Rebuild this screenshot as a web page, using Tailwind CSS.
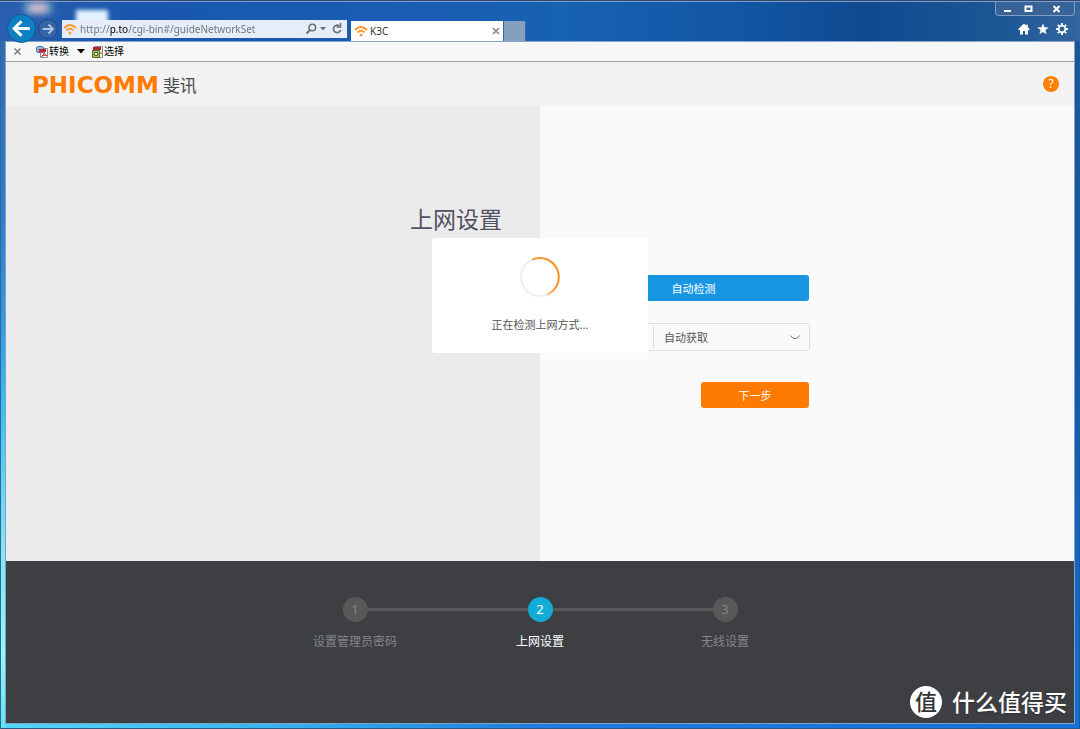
<!DOCTYPE html>
<html lang="zh-CN">
<head>
<meta charset="utf-8">
<title>K3C</title>
<script src="https://cdn.jsdelivr.net/npm/@tailwindcss/browser@4"></script>
</head>
<body class="font-['Noto_Sans','Noto_Sans_CJK_SC',sans-serif] text-[11px] text-[#555]">
<div class="flex min-h-screen flex-col border-t border-[#31486f] bg-[linear-gradient(180deg,#2f68b4_0,#2b7fd0_30%,#2f9de8_45%,#3cc3f6_57%,#7fe6fb_75%,#8ffafd_90%,#5ce3fb_100%),linear-gradient(180deg,#1d5597_0,#0f58b0_50%,#1470dc_100%),linear-gradient(90deg,#55d8fa_0,#38b4f0_25%,#1d7ce0_50%,#1670dc_100%)] bg-[size:6px_100%,6px_calc(100%_-_6px),100%_100%] bg-[position:0_0,100%_0,0_0] bg-no-repeat shadow-[inset_1px_0_0_#3d6485,inset_-1px_-1px_0_#2c5888]">

  <!-- Window title bar -->
  <header class="relative z-10 flex h-10 shrink-0 items-end border-t border-[#7f9ecb] bg-[linear-gradient(90deg,#2a5fae_0,#1957ae_12%,#1a5cb2_35%,#1762b2_52%,#1257a5_68%,#0f4a90_80%,#1d5795_93%,#34669f_100%)] pl-[7px]">
    <div class="absolute top-0 left-6 flex h-3 w-7 bg-[#6b9fc0] blur-[3px]"><i class="mx-auto h-3 w-4 bg-[#c9b9cc]"></i></div>
    <div class="absolute top-2 left-19 h-5 w-8 bg-[#e4f3ff] blur-[2px]"></div>
    <button aria-label="后退" class="relative mb-[-2px] size-[29px] shrink-0 rounded-full border border-[#155a93] bg-[#0d80c4] text-white">
      <svg viewBox="0 0 26 26" class="size-full" fill="none" stroke="currentColor" stroke-width="3"><path d="M21 13H6.500M13 6l-7 7 7 7"/></svg>
    </button>
    <button aria-label="前进" class="relative mb-[2px] ml-[2px] size-5 shrink-0 rounded-full border border-[#23477f] bg-[#3565a8] text-[#b4c8e4]">
      <svg viewBox="0 0 20 20" class="size-full" fill="none" stroke="currentColor" stroke-width="2"><path d="M4 10h11M10.500 5l5 5-5 5"/></svg>
    </button>
    <form class="relative mb-[3px] ml-1 flex h-[18px] w-[285px] shrink-0 items-center gap-[3px] bg-[#e6edf8] pr-1 pl-px text-[#6c7178]">
      <svg viewBox="0 0 14 12" class="h-3 w-[14px] shrink-0" fill="none" stroke="#fa9a2d" stroke-width="2"><path d="M1 5q6-6 12 0M3.500 7.500q3.500-3.500 7 0"/><circle cx="7" cy="10" r="1.500" fill="#fa9a2d" stroke="none"/></svg>
      <input aria-label="地址" value="http://p.to/cgi-bin#/guideNetworkSet" class="h-4 min-w-0 flex-1 bg-[linear-gradient(90deg,#6c7178_30px,#000_30px,#000_48px,#6c7178_48px)] bg-clip-text text-[10px] text-transparent">
      <button type="button" aria-label="搜索"><svg viewBox="0 0 12 12" class="size-3" fill="none" stroke="currentColor" stroke-width="1.600"><circle cx="7.300" cy="4.500" r="3.300"/><path d="M5 7L1.500 10.500" stroke-width="2"/></svg></button>
      <button type="button" aria-label="更多"><svg viewBox="0 0 6 4" class="h-1 w-[6px]" fill="currentColor"><path d="M0 0h6L3 3.500z"/></svg></button>
      <button type="button" aria-label="刷新" class="ml-[2px]"><svg viewBox="0 0 12 12" class="size-3" fill="none" stroke="currentColor" stroke-width="1.600"><path d="M8.500 3A3.700 3.700 0 1 0 9.700 7"/><path d="M5.500 4h4V0" /></svg></button>
    </form>
    <div class="relative ml-1 flex h-5 w-[152px] shrink-0 items-center gap-[2px] bg-white px-[3px] text-[10px] text-[#333]">
      <svg viewBox="0 0 14 12" class="h-3 w-[14px] shrink-0" fill="none" stroke="#fa9a2d" stroke-width="2"><path d="M1 5q6-6 12 0M3.500 7.500q3.500-3.500 7 0"/><circle cx="7" cy="10" r="1.500" fill="#fa9a2d" stroke="none"/></svg>
      <span class="flex-1">K3C</span>
      <button aria-label="关闭标签页"><svg viewBox="0 0 8 8" class="size-2" stroke="#888" stroke-width="1.600"><path d="M1 1l6 6M7 1L1 7"/></svg></button>
    </div>
    <button aria-label="新标签页" class="h-5 w-[23px] shrink-0 border-x border-[#3d659a] bg-[#849fc0]"></button>
    <div class="ml-auto flex h-full flex-col items-end justify-between pr-[5px] text-white">
      <div class="grid h-[14px] w-20 grid-cols-[23px_20px_1fr] divide-x divide-[#3c6597] rounded-b border border-t-0 border-[#7f9dc3] bg-[#376399]">
        <button aria-label="最小化" class="flex items-center justify-center"><svg viewBox="0 0 9 8" class="h-2 w-[9px]"><path d="M1 5h7v2H1z" fill="#fff"/></svg></button>
        <button aria-label="最大化" class="flex items-center justify-center"><svg viewBox="0 0 9 8" class="h-2 w-[9px]" fill="none" stroke="#fff" stroke-width="2"><path d="M1.500 1.500h6v4.500h-6z"/></svg></button>
        <button aria-label="关闭" class="flex items-center justify-center"><svg viewBox="0 0 9 8" class="h-2 w-[9px]" stroke="#fff" stroke-width="2"><path d="M1.500 1l6 6M7.500 1l-6 6"/></svg></button>
      </div>
      <div class="flex gap-[7px] pr-[7px] pb-[6px]">
        <button aria-label="主页"><svg viewBox="0 0 12 12" class="size-3" fill="#fff"><path d="M6 .5L0 6.300l1 1 1-.9V11.500h3V8h2v3.500h3V6.400l1 .9 1-1L9.800 4.200V1.500H8.300v1.200z"/></svg></button>
        <button aria-label="收藏夹"><svg viewBox="0 0 12 12" class="size-3" fill="#fff"><path d="M6 .3l1.500 3.900 4.300.2-3.400 2.600 1.200 4.200L6 8.900l-3.600 2.300L3.600 7 .2 4.400l4.300-.2z"/></svg></button>
        <button aria-label="工具"><svg viewBox="0 0 12 12" class="size-3" fill="none" stroke="#fff"><circle cx="6" cy="6" r="3.300" stroke-width="1.700"/><path d="M6 0v2M6 10v2M0 6h2M10 6h2M1.800 1.800l1.400 1.400M8.800 8.800l1.400 1.400M10.200 1.800L8.800 3.200M3.200 8.800l-1.400 1.400" stroke-width="1.800"/></svg></button>
      </div>
    </div>
  </header>

  <div class="mx-[6px] mb-[6px] flex flex-1 flex-col shadow-[0_0_0_1px_#7fa3c4]">
    <!-- Add-on toolbar -->
    <div class="flex h-[21px] shrink-0 items-center border-t border-b border-t-[#86a5cc] border-b-[#a0a0a0] bg-[#f7f7f7] pl-2 text-[10px] text-black">
      <button aria-label="关闭工具栏"><svg viewBox="0 0 7 7" class="size-[7px]" stroke="#777" stroke-width="1.400"><path d="M.5.500l6 6M6.500.500l-6 6"/></svg></button>
      <button class="ml-[15px] flex items-center">
        <svg viewBox="0 0 13 12" class="h-3 w-[13px]"><path d="M4.500 2.500h7v9h-7z" fill="#fff" stroke="#888"/><rect x=".5" y=".5" width="7" height="6" rx="2" fill="#8fb4dd" stroke="#3a6ea8"/><path d="M3 3h7v3H3z" fill="#c8202c"/><path d="M5.500 10.500c2-1.500 2.500-3 2.300-5 .5 2.500 1.500 3.700 3.200 3.900-2-.3-3.700 0-5.500 1.100z" fill="none" stroke="#c8202c"/></svg>
        转换
      </button>
      <button aria-label="转换选项" class="ml-2"><svg viewBox="0 0 8 5" class="h-[5px] w-2"><path d="M0 0h8L4 4.500z"/></svg></button>
      <button class="ml-[7px] flex items-center">
        <svg viewBox="0 0 12 12" class="size-3"><path d="M2.500.500h8v11h-8z" fill="#fff" stroke="#888"/><path d="M1 1h8v3H1z" fill="#b82230"/><path d="M6 4c1 2 2 3 4 3.500" fill="none" stroke="#c8202c"/><path d="M.5 4.500h7v7h-7z" fill="#a8bf6a" stroke="#4e6b22"/><path d="M2.500 6.500h3v3h-3z" fill="#e8f0cc" stroke="#4e6b22"/></svg>
        选择
      </button>
    </div>

    <!-- Site header -->
    <div class="flex h-11 shrink-0 items-center justify-between bg-[#f2f2f2] pr-[15px] pl-[26px]">
      <a href="#" class="flex items-center gap-1 pt-[2px]">
        <span class="font-['DejaVu_Sans'] text-[23px] leading-6 font-bold text-[#ff7a00]">PHICOMM</span>
        <span class="pt-[2px] text-[17px] leading-6 text-[#4a4a4a]">斐讯</span>
      </a>
      <button aria-label="帮助" class="size-4 rounded-full bg-[#ff7f00] text-center text-[12px] leading-4 text-white">?</button>
    </div>

    <!-- Network setup -->
    <main class="relative grid flex-1 grid-cols-2">
      <section class="bg-[#ebebeb] pt-[97px] pr-[38px] text-right">
        <h1 class="text-[23px] leading-8 text-[#515362]">上网设置</h1>
      </section>
      <section class="bg-[#fafafa] pt-[169px] pl-[38px]">
        <form class="flex w-[232px] flex-col">
          <button type="button" class="mr-px h-[26px] rounded-[3px] bg-[#1896e2] pt-[3px] text-white">自动检测</button>
          <div class="mt-[22px] flex h-7 items-center rounded-[3px] border border-[#dedede] pl-[74px]">
            <select aria-label="上网方式" class="h-[22px] flex-1 appearance-none border-l border-[#dedede] pt-[2px] pl-[10px] text-[#555]"><option>自动获取</option></select>
            <svg viewBox="0 0 10 5" class="mr-[9px] h-[5px] w-[10px]" fill="none" stroke="#777"><path d="M.5.500Q5 7 9.500.500"/></svg>
          </div>
          <button type="button" class="mt-[31px] mr-px h-[26px] w-[108px] self-end rounded-[3px] bg-[#ff7a00] pt-[2px] text-white">下一步</button>
        </form>
      </section>
      <div role="status" class="absolute top-[132px] left-1/2 flex h-[115px] w-[216px] -translate-x-1/2 flex-col items-center rounded-[3px] bg-white pt-[19px]">
        <svg viewBox="0 0 40 40" class="size-10" fill="none" stroke-width="2"><defs><linearGradient id="arc" x1="0" y1="0" x2="0" y2="1"><stop offset="0" stop-color="#ff9326"/><stop offset=".85" stop-color="#ff9326"/><stop offset="1" stop-color="#ffc384"/></linearGradient></defs><circle cx="20" cy="20" r="19" stroke="#efefef"/><path d="M12.500 2.500A19 19 0 0 1 27 37.700" stroke="url(#arc)"/></svg>
        <p class="mt-5 leading-4">正在检测上网方式...</p>
      </div>
    </main>

    <!-- Progress steps -->
    <footer class="relative h-[162px] shrink-0 bg-[#3e3f43] pt-9">
      <ol class="mx-auto grid w-[555px] grid-cols-3 text-center text-[12px] text-[#85868a]">
        <li>
          <div class="flex items-center"><i class="flex-1"></i><span class="size-[25px] rounded-full bg-[#585858] text-[13px] leading-[25px]">1</span><i class="h-[3px] flex-1 bg-[#585858]"></i></div>
          <p class="mt-[10px] leading-5">设置管理员密码</p>
        </li>
        <li class="text-white">
          <div class="flex items-center"><i class="h-[3px] flex-1 bg-[#585858]"></i><span class="size-[25px] rounded-full bg-[#12acd6] text-[13px] leading-[25px]">2</span><i class="h-[3px] flex-1 bg-[#585858]"></i></div>
          <p class="mt-[10px] leading-5">上网设置</p>
        </li>
        <li>
          <div class="flex items-center"><i class="h-[3px] flex-1 bg-[#585858]"></i><span class="size-[25px] rounded-full bg-[#585858] text-[13px] leading-[25px]">3</span><i class="flex-1"></i></div>
          <p class="mt-[10px] leading-5">无线设置</p>
        </li>
      </ol>
      <div class="absolute right-[7px] bottom-[5px] flex items-center gap-[10px] text-[23px] leading-8 font-medium text-white">
        <span class="flex size-8 items-center justify-center rounded-full bg-white pb-[2px] text-[22px] text-[#333]">值</span>
        <span class="text-shadow-sm">什么值得买</span>
      </div>
    </footer>
  </div>
</div>
</body>
</html>
